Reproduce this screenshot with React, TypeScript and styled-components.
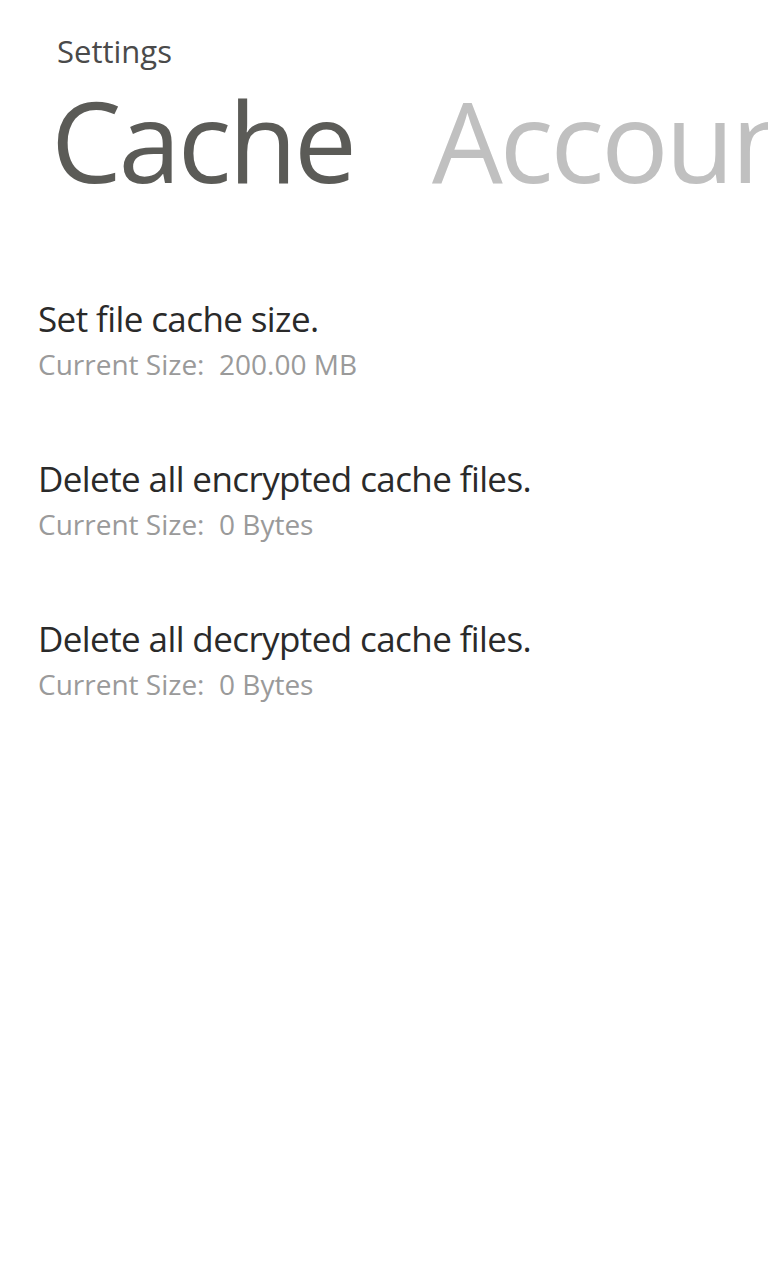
import React from "react";
import styled, { createGlobalStyle } from "styled-components";

const Global = createGlobalStyle`
  html, body { margin: 0; padding: 0; background: #ffffff; }
  body { font-family: "Open Sans", "Noto Sans", sans-serif; width: 768px; height: 1280px; overflow: hidden; }
`;

const Page = styled.div`
  width: 768px;
  height: 1280px;
  background: #ffffff;
  overflow: hidden;
  display: flex;
  flex-direction: column;
`;

const AppTitle = styled.div`
  padding: 32px 0 0 57px;
  font-size: 31px;
  line-height: 38px;
  color: #4a4a4a;
`;

const PivotRow = styled.div`
  display: flex;
  gap: 78px;
  padding-left: 51px;
  white-space: nowrap;
`;

const PivotHeader = styled.div<{ $active?: boolean }>`
  flex-shrink: 0;
  font-size: 112px;
  line-height: 140px;
  letter-spacing: -3px;
  color: ${(p) => (p.$active ? "#5b5b57" : "#c0c0c0")};
`;

const List = styled.div`
  display: flex;
  flex-direction: column;
  gap: 70px;
  padding: 86px 0 0 38px;
`;

const Item = styled.div`
  display: flex;
  flex-direction: column;
`;

const ItemTitle = styled.div`
  font-size: 35px;
  line-height: 46px;
  color: #2a2a2a;
  letter-spacing: -0.6px;
`;

const ItemSub = styled.div`
  font-size: 28px;
  line-height: 44px;
  color: #9a9a9a;
  white-space: pre;
`;

const items = [
  { title: "Set file cache size.", sub: "Current Size:  200.00 MB" },
  { title: "Delete all encrypted cache files.", sub: "Current Size:  0 Bytes" },
  { title: "Delete all decrypted cache files.", sub: "Current Size:  0 Bytes" },
];

export default function App() {
  return (
    <Page>
      <Global />
      <AppTitle>Settings</AppTitle>
      <PivotRow>
        <PivotHeader $active>Cache</PivotHeader>
        <PivotHeader>Accounts</PivotHeader>
      </PivotRow>
      <List>
        {items.map((it, i) => (
          <Item key={i}>
            <ItemTitle>{it.title}</ItemTitle>
            <ItemSub>{it.sub}</ItemSub>
          </Item>
        ))}
      </List>
    </Page>
  );
}
